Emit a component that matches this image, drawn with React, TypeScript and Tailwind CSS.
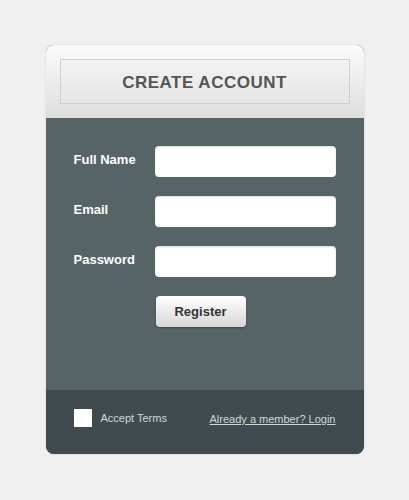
import { ReactNode } from "react";

const Field = ({ label }: { label: string }) => (
  <div className="flex items-center">
    <span className="w-[82px] pb-[3px] text-[13px] font-bold text-white">{label}</span>
    <div className="h-[31px] w-[181px] rounded-[4px] bg-white shadow-[inset_0_1px_2px_rgba(0,0,0,0.15)]" />
  </div>
);

const Card = ({ children }: { children: ReactNode }) => (
  <div className="w-[318px] overflow-hidden rounded-[8px] bg-[#566468] shadow-[0_0_2px_rgba(0,0,0,0.15)]">
    {children}
  </div>
);

export default function App() {
  return (
    <div
      className="flex h-[500px] w-[409px] items-start justify-center bg-[#f0f0f0] pt-[45px]"
      style={{ fontFamily: '"Liberation Sans", Arial, sans-serif' }}
    >
      <Card>
        <div className="bg-gradient-to-b from-[#fbfbfb] to-[#dedede] px-[14px] pb-[14px] pt-[14px]">
          <div className="flex h-[45px] items-center justify-center border border-[#cfcfcf] bg-gradient-to-b from-[#f2f2f2] to-[#e6e6e6] pt-[3px]">
            <h1 className="text-[17px] font-bold tracking-[0.5px] text-[#555555]">CREATE ACCOUNT</h1>
          </div>
        </div>

        <div className="flex h-[272px] flex-col gap-[19px] px-[28px] pt-[28px]">
          <Field label="Full Name" />
          <Field label="Email" />
          <Field label="Password" />
          <div className="pl-[82px]">
            <button
              type="button"
              className="h-[31px] w-[90px] rounded-[4px] bg-gradient-to-b from-[#ffffff] to-[#d8d8d8] text-[13px] font-bold text-[#333333] shadow-[0_1px_2px_rgba(0,0,0,0.3)]"
            >
              Register
            </button>
          </div>
        </div>

        <div className="flex h-[64px] items-start justify-between bg-[#3f4b4f] px-[28px] pt-[19px]">
          <label className="flex items-center gap-[9px]">
            <span className="h-[18px] w-[18px] bg-white" />
            <span className="text-[11px] text-[#d4d8d9]">Accept Terms</span>
          </label>
          <a className="pt-[2px] text-[11px] text-[#d4d8d9] underline">Already a member? Login</a>
        </div>
      </Card>
    </div>
  );
}
